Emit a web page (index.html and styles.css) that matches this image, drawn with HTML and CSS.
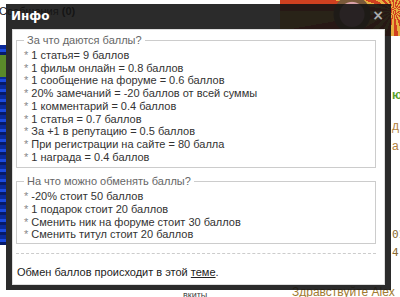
FILE: index.html
```
<!DOCTYPE html>
<html lang="ru">
<head>
  <meta charset="UTF-8">
  <title>Инфо</title>
  <link rel="stylesheet" href="styles.css">
</head>
<body>
  <div class="page">
    <div class="page-top">Сообщения <b>(0)</b></div>
    <div class="side-left"></div>
    <div class="banner"></div>
    <div class="side-right">
      <span class="green">ю</span>
      <span class="orange t1">д</span>
      <span class="orange t2">а</span>
      <span class="dark t3">01</span>
      <span class="dark t4">4,</span>
    </div>
    <div class="page-bottom">
      <span class="small">вкиты</span>
      <span class="hello">Здравствуйте Alex</span>
    </div>
  </div>

  <div class="modal">
    <div class="modal-title">
      <span>Инфо</span>
      <span class="close">×</span>
    </div>
    <div class="modal-body">
      <fieldset class="box">
        <legend>За что даются баллы?</legend>
        <div class="line"><i>*</i> 1 статья= 9 баллов</div>
        <div class="line"><i>*</i> 1 фильм онлайн = 0.8 баллов</div>
        <div class="line"><i>*</i> 1 сообщение на форуме = 0.6 баллов</div>
        <div class="line"><i>*</i> 20% замечаний = -20 баллов от всей суммы</div>
        <div class="line"><i>*</i> 1 комментарий = 0.4 баллов</div>
        <div class="line"><i>*</i> 1 статья = 0.7 баллов</div>
        <div class="line"><i>*</i> За +1 в репутацию = 0.5 баллов</div>
        <div class="line"><i>*</i> При регистрации на сайте = 80 балла</div>
        <div class="line"><i>*</i> 1 награда = 0.4 баллов</div>
      </fieldset>
      <fieldset class="box second">
        <legend>На что можно обменять баллы?</legend>
        <div class="line"><i>*</i> -20% стоит 50 баллов</div>
        <div class="line"><i>*</i> 1 подарок стоит 20 баллов</div>
        <div class="line"><i>*</i> Сменить ник на форуме стоит 30 баллов</div>
        <div class="line"><i>*</i> Сменить титул стоит 20 баллов</div>
      </fieldset>
      <div class="divider"></div>
      <div class="footer">Обмен баллов происходит в этой <a href="#">теме</a>.</div>
    </div>
  </div>
</body>
</html>
```
FILE: styles.css
```
body { margin: 0; background: #fff; font-family: "Liberation Sans", Arial, sans-serif; font-size: 11px; color: #333; overflow: hidden; }
.page { position: relative; width: 400px; height: 297px; }
.page-top { position: absolute; left: -1px; top: 5px; color: #222; font-size: 11px; }
.side-left { position: absolute; left: 0; top: 45px; width: 6px; height: 200px; background: repeating-linear-gradient(#0a2a9a 0 4px, #1a4ae0 4px 7px, #061a6a 7px 10px); }
.side-left::before { content: ""; position: absolute; left: 0; top: 10px; width: 6px; height: 22px; background: #5a8a2a; }
.banner { position: absolute; right: 0; top: 0; width: 120px; height: 36px; background: radial-gradient(circle at 60% 40%, #d9a0a8 0 12px, #7a5a3a 13px 18px, transparent 19px), repeating-conic-gradient(from 0deg at 95% 30%, #e8b040 0 10deg, #d04020 10deg 20deg); }
.side-right { position: absolute; left: 392px; top: 0; width: 8px; height: 297px; font-size: 12px; }
.side-right span { position: absolute; left: 0; }
.green { top: 88px; color: #5aa02a; font-weight: bold; }
.orange { color: #b08040; }
.t1 { top: 119px; }
.t2 { top: 139px; }
.dark { color: #8a6a30; font-family: "DejaVu Sans Mono", monospace; font-size: 11px; }
.t3 { top: 228px; }
.t4 { top: 246px; }
.page-bottom { position: absolute; left: 0; top: 284px; width: 400px; }
.small { position: absolute; left: 183px; top: 6px; font-size: 9px; color: #444; }
.hello { position: absolute; left: 292px; top: 1px; font-size: 12px; color: #a07a30; }

.modal { position: absolute; left: 6px; top: 4px; width: 373px; padding: 0 6px 5px 6px; background: rgba(20, 20, 20, 0.9); }
.modal-title { height: 25px; display: flex; align-items: center; justify-content: space-between; color: #fff; font-weight: bold; font-size: 12px; font-family: "DejaVu Sans", sans-serif; }
.modal-title span:first-child { margin-left: -1px; margin-top: -2px; }
.close { color: #aaa; font-size: 14px; margin-right: 1px; margin-top: -3px; }
.modal-body { background: #fff; border: 1px solid #ddd; height: 256px; padding: 4px 4px 0 3px; box-sizing: border-box; }
.box { margin: 0 4px 0 0; padding: 2px 6px 4px 7px; border: 1px solid #ccc; }
.box legend { padding: 0 3px; color: #666; line-height: 13px; }
.second { margin-top: 7px; padding-top: 2px; padding-bottom: 2px; }
.line { line-height: 12.7px; color: #333; }
.line i { font-style: normal; color: #888; }
.divider { margin: 9px 4px 0 0; border-top: 1px dashed #ccc; }
.footer { margin: 12px 0 0 1px; color: #222; }
.footer a { color: #222; }
```
